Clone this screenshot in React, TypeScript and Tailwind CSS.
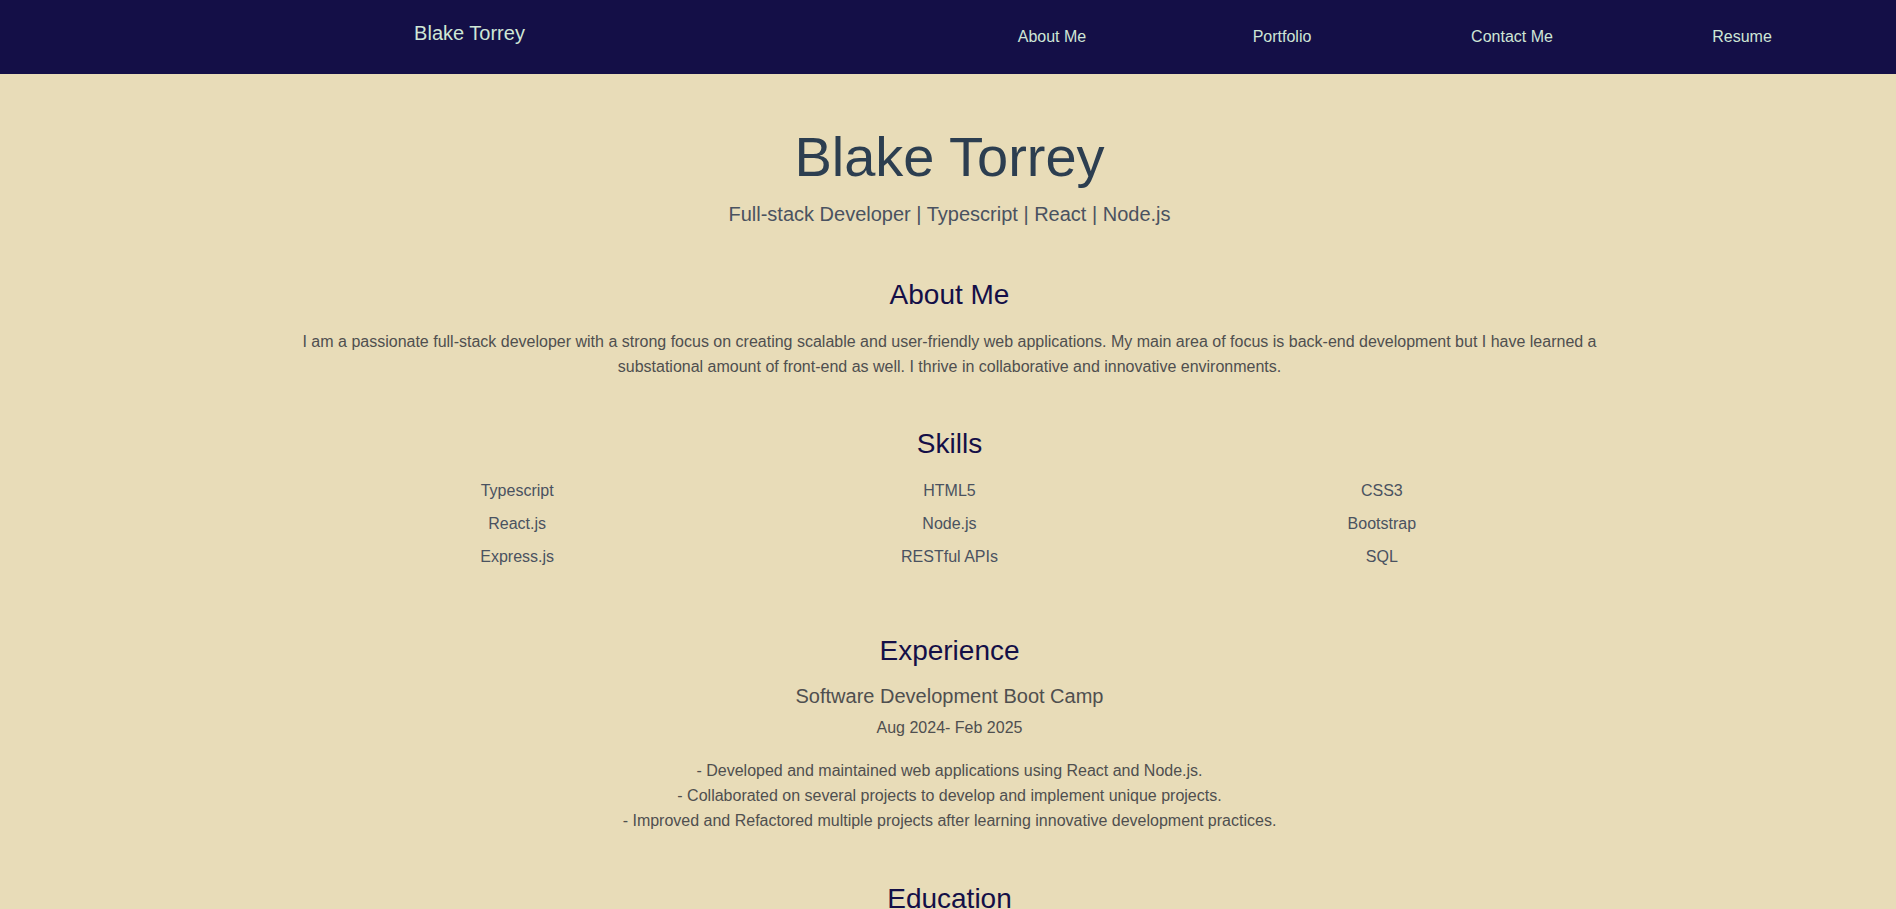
import React from "react";

const skills = [
  "Typescript",
  "HTML5",
  "CSS3",
  "React.js",
  "Node.js",
  "Bootstrap",
  "Express.js",
  "RESTful APIs",
  "SQL",
];

const navLinks = ["About Me", "Portfolio", "Contact Me", "Resume"];

const bullets = [
  "- Developed and maintained web applications using React and Node.js.",
  "- Collaborated on several projects to develop and implement unique projects.",
  "- Improved and Refactored multiple projects after learning innovative development practices.",
];

const SectionTitle: React.FC<{ children: React.ReactNode; className?: string }> = ({ children, className }) => (
  <h2 className={`text-[28px] leading-[34px] text-[#140f47] text-center ${className ?? ""}`}>{children}</h2>
);

export default function App() {
  return (
    <div className="min-h-screen bg-[#e8dcb8] font-['Liberation_Sans',Arial,sans-serif]">
      <header className="h-[74px] bg-[#140f47] flex items-center">
        <div className="w-[939px] text-center text-[20px] text-[#cfe6d6] -mt-[9px]">Blake Torrey</div>
        <nav className="flex -ml-[2px]">
          {navLinks.map((link) => (
            <a key={link} href="#" className="w-[230px] text-center text-[16px] text-[#cfe6d6]">
              {link}
            </a>
          ))}
        </nav>
      </header>

      <main className="max-w-[1300px] mx-auto pl-[3px] text-center pb-10">
        <h1 className="mt-[49px] text-[56px] leading-[67px] text-[#2c3e50]">Blake Torrey</h1>
        <p className="mt-[10px] text-[20px] leading-[28px] text-[#4a5260]">
          Full-stack Developer | Typescript | React | Node.js
        </p>

        <SectionTitle className="mt-[50px]">About Me</SectionTitle>
        <p className="mt-[17px] text-[16px] leading-[25px] text-[#4f4f4f]">
          I am a passionate full-stack developer with a strong focus on creating scalable and user-friendly web
          applications. My main area of focus is back-end development but I have learned a substational amount of
          front-end as well. I thrive in collaborative and innovative environments.
        </p>

        <SectionTitle className="mt-[48px]">Skills</SectionTitle>
        <div className="mt-[18px] grid grid-cols-3 gap-y-[9px] text-[16px] leading-[24px] text-[#4a5260]">
          {skills.map((s) => (
            <div key={s}>{s}</div>
          ))}
        </div>

        <SectionTitle className="mt-[65px]">Experience</SectionTitle>
        <h3 className="mt-[14px] text-[20px] leading-[28px] text-[#4f4f4f]">Software Development Boot Camp</h3>
        <p className="mt-[6px] text-[16px] leading-[24px] text-[#4f4f4f]">Aug 2024- Feb 2025</p>
        <div className="mt-[18px] text-[16px] leading-[25px] text-[#4f4f4f]">
          {bullets.map((b) => (
            <p key={b}>{b}</p>
          ))}
        </div>

        <SectionTitle className="mt-[49px]">Education</SectionTitle>
      </main>
    </div>
  );
}
